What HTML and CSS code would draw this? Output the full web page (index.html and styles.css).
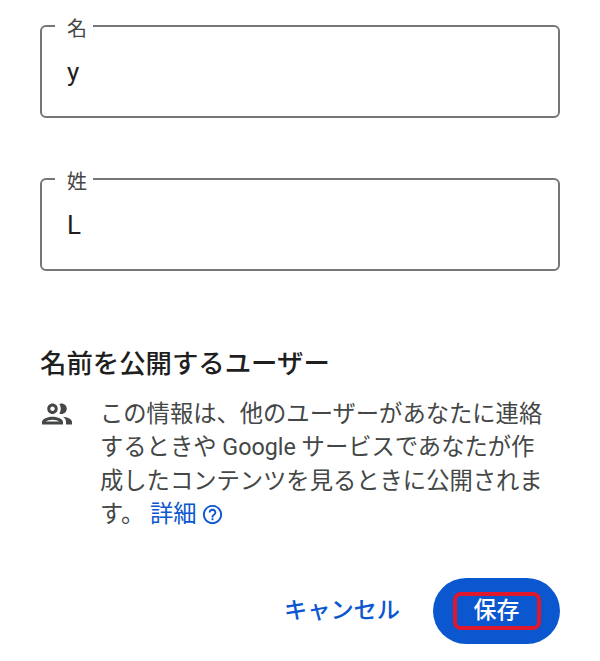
FILE: index.html
```html
<!DOCTYPE html>
<html lang="ja">
<head>
  <meta charset="UTF-8">
  <title>名前の編集</title>
  <link rel="stylesheet" href="styles.css">
</head>
<body>
  <main class="page">
    <!-- Name fields -->
    <div class="field">
      <span class="field-label">名</span>
      <span class="field-value">y</span>
    </div>
    <div class="field">
      <span class="field-label">姓</span>
      <span class="field-value">L</span>
    </div>

    <!-- Who can see the name -->
    <h2 class="heading">名前を公開するユーザー</h2>
    <div class="info">
      <svg class="info-icon" viewBox="0 0 24 24" width="36" height="36" fill="#444746">
        <path d="M9 13.75c-2.34 0-7 1.17-7 3.5V19h14v-1.75c0-2.33-4.66-3.5-7-3.5zM4.34 17c.84-.58 2.87-1.25 4.66-1.25s3.82.67 4.66 1.25H4.34zM9 12c1.93 0 3.5-1.57 3.5-3.5S10.93 5 9 5 5.500 6.570 5.500 8.500 7.070 12 9 12zm0-5c.83 0 1.500.67 1.500 1.500S9.830 10 9 10s-1.500-.67-1.500-1.500S8.170 7 9 7zm7.040 6.810c1.160.84 1.960 1.960 1.960 3.440V19h4v-1.750c0-2.020-3.500-3.170-5.960-3.440zM15 12c1.930 0 3.500-1.570 3.500-3.500S16.930 5 15 5c-.54 0-1.040.13-1.500.35.630.89 1 1.980 1 3.150s-.37 2.260-1 3.150c.46.220.96.350 1.500.350z"/>
      </svg>
      <p class="info-text">この情報は、他のユーザーがあなたに連絡するときや Google サービスであなたが作成したコンテンツを見るときに公開されます。 <a class="link" href="#">詳細</a><svg class="help-icon" viewBox="0 0 24 24" width="23" height="23" fill="#0b57d0"><path d="M11 18h2v-2h-2v2zm1-16C6.480 2 2 6.480 2 12s4.480 10 10 10 10-4.480 10-10S17.520 2 12 2zm0 18c-4.410 0-8-3.590-8-8s3.590-8 8-8 8 3.590 8 8-3.590 8-8 8zm0-14c-2.210 0-4 1.790-4 4h2c0-1.100.9-2 2-2s2 .9 2 2c0 2-3 1.750-3 5h2c0-2.250 3-2.500 3-5 0-2.210-1.790-4-4-4z"/></svg></p>
    </div>

    <div class="actions">
      <button class="btn-text">キャンセル</button>
      <button class="btn-save"><span class="save-mark">保存</span></button>
    </div>
  </main>
</body>
</html>
```

FILE: styles.css
```css
* {
  box-sizing: border-box;
}
body {
  margin: 0;
  background: #fff;
  font-family: Roboto, "Noto Sans CJK JP", sans-serif;
  color: #1f1f1f;
}
.page {
  padding: 25px 40px 0;
}
.field {
  position: relative;
  height: 93px;
  margin-bottom: 60px;
  padding: 30px 25px 0;
  border: 2px solid #747775;
  border-radius: 6px;
}
.field-label {
  position: absolute;
  top: -9px;
  left: 13px;
  padding: 0 6px 0 12px;
  background: #fff;
  color: #444746;
  font-size: 20px;
  line-height: 22px;
}
.field-value {
  font-size: 26px;
  line-height: 30px;
}
.heading {
  margin: 0;
  padding-top: 16px;
  font-size: 26.4px;
  line-height: 34px;
  font-weight: 500;
}
.info {
  display: flex;
  margin-top: 17px;
}
.info-icon {
  flex: none;
  margin: -2px 25px 0 -1px;
}
.info-text {
  margin: 0;
  padding-right: 12px;
  color: #444746;
  font-size: 23.3px;
  line-height: 33.4px;
}
.link {
  color: #0b57d0;
  text-decoration: none;
}
.help-icon {
  margin-left: 4px;
  vertical-align: -4px;
}
.actions {
  display: flex;
  justify-content: flex-end;
  align-items: center;
  margin-top: 46px;
}
.btn-text {
  margin: 0 33px 5px 0;
  padding: 0;
  border: 0;
  background: none;
  color: #0b57d0;
  font: 500 23.2px Roboto, "Noto Sans CJK JP", sans-serif;
}
.btn-save {
  width: 127px;
  height: 66px;
  padding: 0;
  border: 0;
  border-radius: 33px;
  background: #0b57d0;
  color: #fff;
  font: 500 23px Roboto, "Noto Sans CJK JP", sans-serif;
}
.save-mark {
  display: inline-block;
  width: 88px;
  height: 38px;
  line-height: 30px;
  border: 4px solid #e0182d;
  border-radius: 8px;
}
```
